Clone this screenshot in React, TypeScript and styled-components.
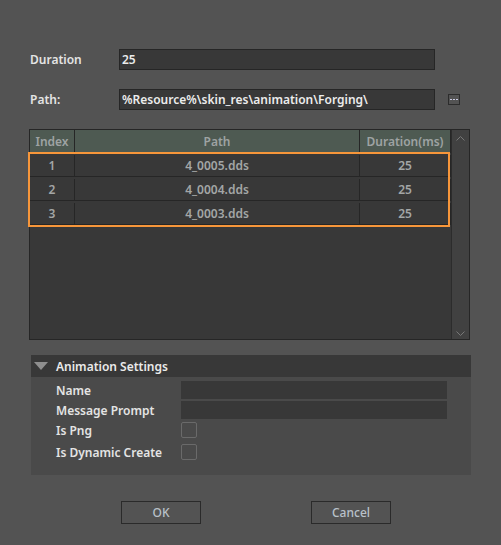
import React from "react";
import styled, { createGlobalStyle } from "styled-components";

const GlobalStyle = createGlobalStyle`
  html, body {
    margin: 0;
    padding: 0;
    background: #535353;
  }
  * {
    box-sizing: border-box;
  }
`;

const Dialog = styled.div`
  width: 501px;
  height: 545px;
  background: #535353;
  padding: 49px 0 0 29px;
  font-family: "Noto Sans", "DejaVu Sans", sans-serif;
  font-size: 12px;
  font-weight: 600;
  color: #e4e4e4;
  display: flex;
  flex-direction: column;
`;

const FieldRow = styled.div<{ $gap?: number }>`
  display: flex;
  align-items: center;
  height: 21px;
  margin-bottom: ${(p) => p.$gap ?? 0}px;
`;

const FieldLabel = styled.div`
  width: 90px;
  padding-left: 1px;
`;

const TextBox = styled.div`
  width: 316px;
  height: 21px;
  background: #383838;
  border: 1px solid #262626;
  padding: 0 2px;
  line-height: 19px;
  color: #ececec;
  white-space: nowrap;
  overflow: hidden;
`;

const DotsButton = styled.div`
  margin-left: 13px;
  width: 12px;
  height: 11px;
  border: 1px solid #2c2c2c;
  display: flex;
  align-items: center;
  justify-content: center;
  gap: 1px;
`;

const Dot = styled.span`
  width: 2px;
  height: 1px;
  background: #c9c9e0;
`;

const TableFrame = styled.div`
  position: relative;
  margin-top: 19px;
  width: 441px;
  height: 211px;
  border: 1px solid #262626;
  background: #383838;
  display: flex;
`;

const TableBody = styled.div`
  flex: 1;
  display: flex;
  flex-direction: column;
`;

const Row = styled.div<{ $header?: boolean }>`
  display: grid;
  grid-template-columns: 45px 285px 91px;
  height: ${(p) => (p.$header ? 23 : 24)}px;
  padding-top: ${(p) => (p.$header ? 0 : 2)}px;
  background: ${(p) => (p.$header ? "#4e5a52" : "#383838")};
  color: ${(p) => (p.$header ? "#9ea3a3" : "#a3a6a6")};
  border-bottom: 1px solid #262626;
`;

const Cell = styled.div`
  display: flex;
  align-items: center;
  justify-content: center;
  border-right: 1px solid #262626;
`;

const ScrollBar = styled.div`
  width: 19px;
  background: #414141;
  border-left: 1px solid #2c2c2c;
  display: flex;
  flex-direction: column;
  justify-content: space-between;
  align-items: center;
  padding: 6px 0 3px;
`;

const Highlight = styled.div`
  position: absolute;
  left: -2px;
  top: 22px;
  width: 422px;
  height: 75px;
  border: 2px solid #f7963a;
  pointer-events: none;
`;

const Panel = styled.div`
  margin-top: 15px;
  margin-left: 2px;
  width: 440px;
  height: 120px;
  background: #4a4a4a;
`;

const PanelHeader = styled.div`
  height: 22px;
  background: #383838;
  display: flex;
  align-items: center;
  padding-left: 3px;
  color: #eaeaea;
`;

const Triangle = styled.span`
  width: 0;
  height: 0;
  border-left: 7px solid transparent;
  border-right: 7px solid transparent;
  border-top: 8px solid #8f8f8f;
  margin-right: 8px;
`;

const PanelBody = styled.div`
  padding: 4px 0 0 25px;
  display: grid;
  grid-template-columns: 125px 266px;
  grid-template-rows: 18px 18px 18px 22px;
  row-gap: 2px;
  align-items: center;
`;

const PanelLabel = styled.div`
  color: #e4e4e4;
`;

const DarkInput = styled.div`
  height: 18px;
  background: #383838;
`;

const CheckBox = styled.div`
  width: 16px;
  height: 16px;
  border: 1px solid #6a6a6a;
  border-radius: 2px;
`;

const ButtonBar = styled.div`
  margin-top: 26px;
  display: flex;
  gap: 110px;
  padding-left: 92px;
`;

const Button = styled.div`
  width: 80px;
  height: 23px;
  border: 1px solid #2a2a2a;
  display: flex;
  align-items: center;
  justify-content: center;
  color: #b9c1c9;
  font-weight: 500;
`;

const Chevron: React.FC<{ up?: boolean }> = ({ up }) => (
  <svg width="9" height="5" viewBox="0 0 9 5">
    <path
      d={up ? "M0.5 4.5 L4.5 0.5 L8.5 4.5" : "M0.5 0.5 L4.5 4.5 L8.5 0.5"}
      fill="none"
      stroke="#777"
      strokeWidth="1"
    />
  </svg>
);

const rows = [
  { index: 1, path: "4_0005.dds", duration: 25 },
  { index: 2, path: "4_0004.dds", duration: 25 },
  { index: 3, path: "4_0003.dds", duration: 25 },
];

export default function App() {
  return (
    <>
      <GlobalStyle />
      <Dialog>
        <FieldRow $gap={19}>
          <FieldLabel>Duration</FieldLabel>
          <TextBox>25</TextBox>
        </FieldRow>
        <FieldRow>
          <FieldLabel>Path:</FieldLabel>
          <TextBox>%Resource%\skin_res\animation\Forging\</TextBox>
          <DotsButton>
            <Dot />
            <Dot />
            <Dot />
          </DotsButton>
        </FieldRow>

        <TableFrame>
          <TableBody>
            <Row $header>
              <Cell>Index</Cell>
              <Cell>Path</Cell>
              <Cell>Duration(ms)</Cell>
            </Row>
            {rows.map((r) => (
              <Row key={r.index}>
                <Cell>{r.index}</Cell>
                <Cell>{r.path}</Cell>
                <Cell>{r.duration}</Cell>
              </Row>
            ))}
          </TableBody>
          <ScrollBar>
            <Chevron up />
            <Chevron />
          </ScrollBar>
          <Highlight />
        </TableFrame>

        <Panel>
          <PanelHeader>
            <Triangle />
            Animation Settings
          </PanelHeader>
          <PanelBody>
            <PanelLabel>Name</PanelLabel>
            <DarkInput />
            <PanelLabel>Message Prompt</PanelLabel>
            <DarkInput />
            <PanelLabel>Is Png</PanelLabel>
            <CheckBox />
            <PanelLabel>Is Dynamic Create</PanelLabel>
            <CheckBox />
          </PanelBody>
        </Panel>

        <ButtonBar>
          <Button>OK</Button>
          <Button>Cancel</Button>
        </ButtonBar>
      </Dialog>
    </>
  );
}
